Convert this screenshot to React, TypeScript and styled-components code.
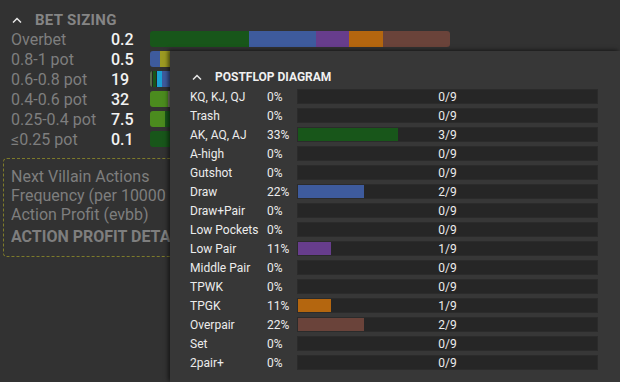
import React from 'react';
import styled, { createGlobalStyle } from 'styled-components';

const GlobalStyle = createGlobalStyle`
  body {
    margin: 0;
    background: #323232;
    font-family: Roboto, 'Liberation Sans', sans-serif;
    overflow: hidden;
  }
`;

const Page = styled.div`
  position: relative;
  width: 620px;
  height: 382px;
  overflow: hidden;
  background: #323232;
`;

const Panel = styled.div`
  padding: 11px 0 0 0;
`;

const SectionHeader = styled.div`
  display: flex;
  align-items: center;
  height: 18px;
  padding-left: 12px;
  color: #858585;
  font-size: 15px;
  font-weight: 700;
  letter-spacing: 0.3px;
  text-transform: uppercase;

  svg {
    margin-right: 13px;
  }
`;

const SizingRow = styled.div`
  display: grid;
  grid-template-columns: 100px 39px 300px;
  align-items: center;
  height: 20px;
  padding-left: 11px;
  font-size: 16px;
`;

const SizingLabel = styled.span`
  color: #7e7e7e;
`;

const SizingValue = styled.span`
  color: #f2f2f2;
  font-weight: 500;
`;

const StackBar = styled.div`
  display: flex;
  height: 16px;
  border-radius: 3px;
  overflow: hidden;
`;

const Segment = styled.div<{ color: string; w: number }>`
  flex: 0 0 ${(p) => p.w}px;
  background: ${(p) => p.color};
`;

const DetailBox = styled.div`
  margin: 9px 0 0 3px;
  width: 420px;
  padding: 8px 7px 10px;
  border: 1px dashed #7d7a2a;
  border-radius: 4px;
  color: #7e7e7e;
  font-size: 16px;
  line-height: 19px;
`;

/* the popover covers the rest of the box, so its text is cut where the popover starts */
const DetailBody = styled.div`
  width: 159px;
  overflow: hidden;
  white-space: nowrap;
`;

const DetailTitle = styled.div`
  margin-top: 3px;
  font-weight: 700;
  text-transform: uppercase;
`;

const Popover = styled.div`
  position: absolute;
  left: 170px;
  top: 51px;
  right: 0;
  bottom: 0;
  background: #373737;
  box-shadow: -2px -1px 4px rgba(0, 0, 0, 0.55);
  padding: 17px 22px 0 20px;
`;

const PopoverHeader = styled.div`
  display: flex;
  align-items: center;
  height: 18px;
  padding-left: 2px;
  margin-bottom: 1px;
  color: #f0f0f0;
  font-size: 12px;
  font-weight: 700;

  svg {
    margin-right: 13px;
  }
`;

const DiagramRow = styled.div`
  display: grid;
  grid-template-columns: 77px 30px 1fr;
  align-items: center;
  height: 19px;
  color: #ececec;
  font-size: 12px;
  white-space: nowrap;
`;

const Track = styled.div`
  position: relative;
  height: 13px;
  background: #262626;
  border: 1px solid #2b2b2b;
  display: flex;
  align-items: center;
  justify-content: center;
`;

const Fill = styled.div<{ color: string }>`
  position: absolute;
  left: 0;
  top: 0;
  bottom: 0;
  background: ${(p) => p.color};
`;

const Count = styled.span`
  position: relative;
  color: #ececec;
  font-size: 12px;
`;

const Chevron = ({ color }: { color: string }) => (
  <svg width="10" height="6" viewBox="0 0 10 6">
    <polyline points="1,5.5 5,1.5 9,5.5" fill="none" stroke={color} strokeWidth="1.5" />
  </svg>
);

const GREEN = '#18561a';
const BLUE = '#3e5b9d';
const PURPLE = '#673d8c';
const ORANGE = '#b4660f';
const BROWN = '#6a433a';
const LIGHT_GREEN = '#4b8b1e';

const sizing: { label: string; value: string; segs: [string, number][] }[] = [
  {
    label: 'Overbet',
    value: '0.2',
    segs: [
      [GREEN, 99],
      [BLUE, 67],
      [PURPLE, 33],
      [ORANGE, 34],
      [BROWN, 67],
    ],
  },
  {
    label: '0.8-1 pot',
    value: '0.5',
    segs: [
      [BLUE, 10],
      ['#9c9a22', 290],
    ],
  },
  {
    label: '0.6-0.8 pot',
    value: '19',
    segs: [
      ['#5a6a4a', 2],
      ['#262626', 1],
      [GREEN, 3],
      ['#262626', 1],
      ['#1aa2d4', 5],
      [BLUE, 288],
    ],
  },
  {
    label: '0.4-0.6 pot',
    value: '32',
    segs: [
      [LIGHT_GREEN, 18],
      ['#7a7a6a', 282],
    ],
  },
  {
    label: '0.25-0.4 pot',
    value: '7.5',
    segs: [
      [LIGHT_GREEN, 15],
      [GREEN, 285],
    ],
  },
  {
    label: '≤0.25 pot',
    value: '0.1',
    segs: [[GREEN, 300]],
  },
];

const diagram: { label: string; pct: number; hits: number; color?: string }[] = [
  { label: 'KQ, KJ, QJ', pct: 0, hits: 0 },
  { label: 'Trash', pct: 0, hits: 0 },
  { label: 'AK, AQ, AJ', pct: 33, hits: 3, color: GREEN },
  { label: 'A-high', pct: 0, hits: 0 },
  { label: 'Gutshot', pct: 0, hits: 0 },
  { label: 'Draw', pct: 22, hits: 2, color: BLUE },
  { label: 'Draw+Pair', pct: 0, hits: 0 },
  { label: 'Low Pockets', pct: 0, hits: 0 },
  { label: 'Low Pair', pct: 11, hits: 1, color: PURPLE },
  { label: 'Middle Pair', pct: 0, hits: 0 },
  { label: 'TPWK', pct: 0, hits: 0 },
  { label: 'TPGK', pct: 11, hits: 1, color: ORANGE },
  { label: 'Overpair', pct: 22, hits: 2, color: BROWN },
  { label: 'Set', pct: 0, hits: 0 },
  { label: '2pair+', pct: 0, hits: 0 },
];

export default function App() {
  return (
    <Page>
      <GlobalStyle />
      <Panel>
        <SectionHeader>
          <Chevron color="#e6e6e6" />
          Bet Sizing
        </SectionHeader>
        {sizing.map((row) => (
          <SizingRow key={row.label}>
            <SizingLabel>{row.label}</SizingLabel>
            <SizingValue>{row.value}</SizingValue>
            <StackBar>
              {row.segs.map(([color, w], i) => (
                <Segment key={i} color={color} w={w} />
              ))}
            </StackBar>
          </SizingRow>
        ))}
        <DetailBox>
          <DetailBody>
            <div>Next Villain Actions</div>
            <div>Frequency (per 10000 hands)</div>
            <div>Action Profit (evbb)</div>
            <DetailTitle>Action Profit Details</DetailTitle>
          </DetailBody>
        </DetailBox>
      </Panel>

      <Popover>
        <PopoverHeader>
          <Chevron color="#e6e6e6" />
          POSTFLOP DIAGRAM
        </PopoverHeader>
        {diagram.map((row) => (
          <DiagramRow key={row.label}>
            <span>{row.label}</span>
            <span>{row.pct}%</span>
            <Track>
              {row.color && <Fill color={row.color} style={{ width: `${(row.hits / 9) * 100}%` }} />}
              <Count>{row.hits}/9</Count>
            </Track>
          </DiagramRow>
        ))}
      </Popover>
    </Page>
  );
}
